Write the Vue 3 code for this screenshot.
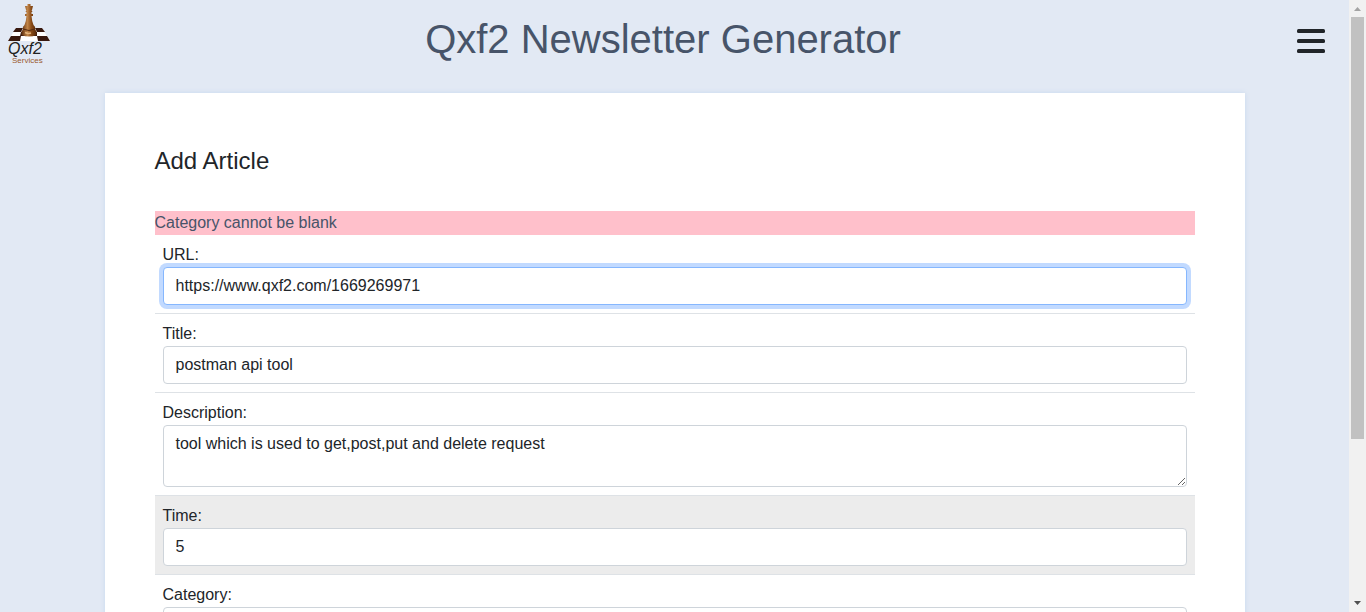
<script setup>
import { reactive } from 'vue'

const article = reactive({
  url: 'https://www.qxf2.com/1669269971',
  title: 'postman api tool',
  description: 'tool which is used to get,post,put and delete request',
  time: '5',
  category: '',
})
</script>

<template>
  <div class="shell">
    <div class="page">
      <header class="top">
        <a class="brand" href="#" aria-label="Qxf2 Services">
          <svg width="44" height="62" viewBox="0 0 44 62">
            <defs>
              <linearGradient id="wood" x1="0" x2="1" y1="0" y2="0">
                <stop offset="0" stop-color="#5c2c0c" />
                <stop offset="0.4" stop-color="#c08448" />
                <stop offset="0.65" stop-color="#8a4c18" />
                <stop offset="1" stop-color="#552808" />
              </linearGradient>
            </defs>
            <path d="M9 24H35L43 37H1Z" fill="#fff" />
            <path d="M9 24H16L14 28H6ZM28 24H35L38 28H30ZM14 28H30V32H13ZM4 32H14L13 37H1ZM30 32H40L43 37H31Z" fill="#38190f" />
            <path d="M20.500 0H23.500V2H26L25 6H24.500L25.500 8H24.500V10H26V12H24.500Q25 18 26.500 21Q29 23 28 25Q30 27 29.500 31Q22 34 14.500 31Q14 27 16 25Q15 23 17.500 21Q19 18 19.500 12H18V10H19.500V8H18.500L19.500 6H19L18 2H20.500Z" fill="url(#wood)" />
            <path d="M16 25Q22 28 28 25" fill="none" stroke="#54290f" />
            <path d="M18 28.500Q21 30 24 29" fill="none" stroke="#e2b27a" stroke-width="1.500" />
            <text class="brand-name" x="1" y="50">Qxf2</text>
            <text class="brand-sub" x="5" y="59">Services</text>
          </svg>
        </a>
        <h1>Qxf2 Newsletter Generator</h1>
        <button class="menu" type="button" aria-label="Menu">
          <svg width="28" height="24" viewBox="0 0 28 24" fill="#212529">
            <rect width="28" height="4" rx="1.500" />
            <rect y="10" width="28" height="4" rx="1.500" />
            <rect y="20" width="28" height="4" rx="1.500" />
          </svg>
        </button>
      </header>

      <main class="card">
        <h2>Add Article</h2>
        <p class="message" role="alert">Category cannot be blank</p>
        <form @submit.prevent>
          <div class="row">
            <label for="url">URL:</label>
            <input id="url" v-model="article.url" class="control active" type="text" />
          </div>
          <div class="row">
            <label for="title">Title:</label>
            <input id="title" v-model="article.title" class="control" type="text" />
          </div>
          <div class="row">
            <label for="description">Description:</label>
            <textarea id="description" v-model="article.description" class="control" rows="2"></textarea>
          </div>
          <div class="row hovered">
            <label for="time">Time:</label>
            <input id="time" v-model="article.time" class="control" type="text" />
          </div>
          <div class="row">
            <label for="category">Category:</label>
            <select id="category" v-model="article.category" class="control">
              <option value=""></option>
            </select>
          </div>
        </form>
      </main>
    </div>

    <div class="scrollbar" aria-hidden="true">
      <svg class="arrow" width="17" height="17" viewBox="0 0 17 17"><path d="M5 11L8.500 7L12 11Z" fill="#a3a3a3" /></svg>
      <div class="track"><div class="thumb"></div></div>
      <svg class="arrow" width="17" height="17" viewBox="0 0 17 17"><path d="M5 6L8.500 10L12 6Z" fill="#505050" /></svg>
    </div>
  </div>
</template>

<style>
body {
  margin: 0;
  background: #e2e9f4;
}
</style>

<style scoped>
.shell,
.shell * {
  box-sizing: border-box;
}
.shell {
  display: flex;
  height: 100vh;
  overflow: hidden;
  background: #e2e9f4;
  color: #212529;
  font-family: "Liberation Sans", Arial, sans-serif;
  font-size: 16px;
  line-height: 24px;
}
.page {
  flex: 1;
  min-width: 0;
  overflow: hidden;
}
.top {
  display: flex;
  align-items: flex-start;
  height: 93px;
}
.brand {
  width: 58px;
  padding: 4px 0 0 7px;
}
.brand svg,
.menu svg,
.arrow {
  display: block;
}
.brand-name {
  font: italic 16px "Liberation Sans", sans-serif;
  fill: #222;
}
.brand-sub {
  font: 8px "Liberation Sans", sans-serif;
  fill: #9a5a30;
}
h1 {
  flex: 1;
  margin: 0;
  padding-top: 15px;
  font-size: 40px;
  font-weight: 400;
  line-height: 48px;
  text-align: center;
  color: #475469;
}
.menu {
  width: 81px;
  padding: 29px 24px 0 29px;
  border: 0;
  background: none;
}
.card {
  max-width: 1140px;
  margin: 0 auto;
  padding: 50px;
  background: #fff;
  box-shadow: 0 0 5px #c8d9ee;
}
h2 {
  margin: 0 0 32px;
  padding: 2px 0;
  font-size: 24px;
  font-weight: 400;
  line-height: 32px;
}
.message {
  margin: 0;
  background: #ffc0cb;
  color: #475469;
}
.row {
  padding: 8px;
}
.row + .row {
  border-top: 1px solid #dee2e6;
}
.hovered {
  background: #ececec;
}
label {
  display: block;
}
.control {
  display: block;
  width: 100%;
  height: 38px;
  margin: 0;
  padding: 6px 12px;
  border: 1px solid #ced4da;
  border-radius: 4px;
  outline: 0;
  background: #fff;
  color: #212529;
  font: inherit;
}
textarea.control {
  height: 62px;
  resize: vertical;
  overflow: auto;
}
.active,
.control:focus {
  border-color: #86b7fe;
  box-shadow: 0 0 0 4px #c2daff;
}
.scrollbar {
  display: flex;
  flex-direction: column;
  width: 17px;
  background: #f1f1f1;
}
.track {
  flex: 1;
  padding: 0 2px;
}
.thumb {
  height: 73%;
  background: #c1c1c1;
}
</style>
